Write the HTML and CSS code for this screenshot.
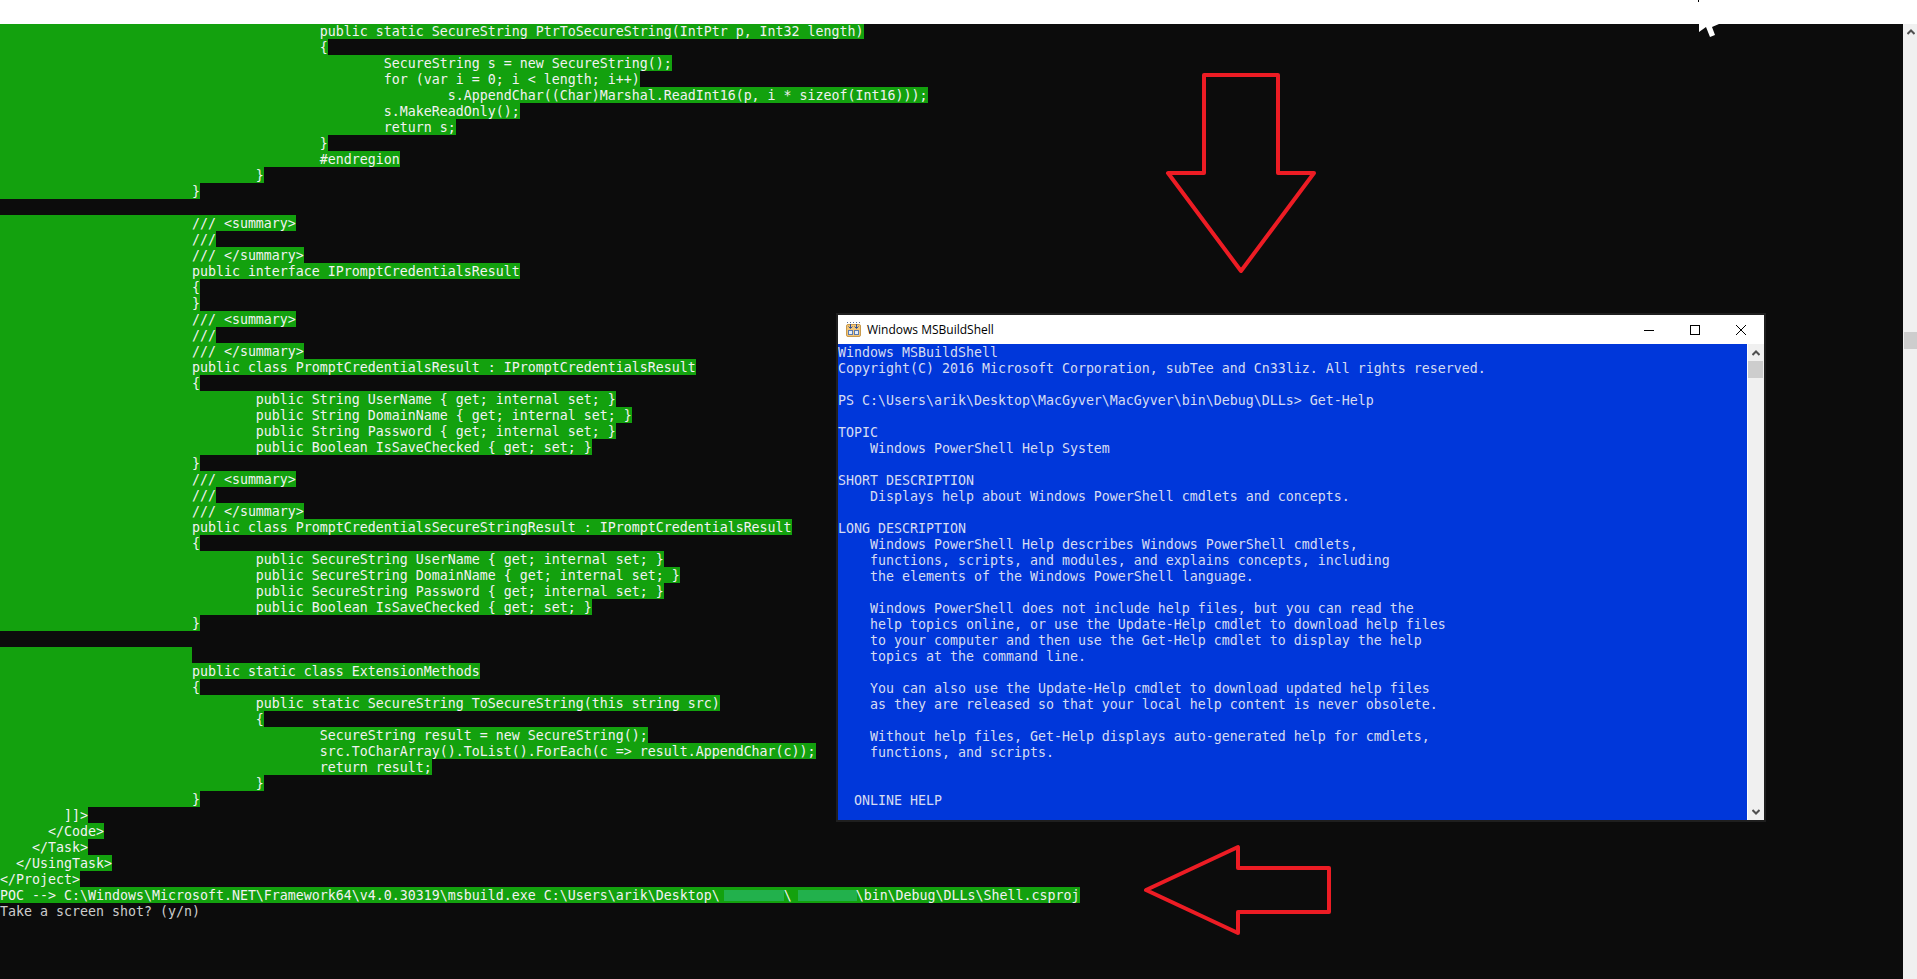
FILE: index.html
```html
<!DOCTYPE html>
<html lang="en">
<head>
<meta charset="utf-8">
<title>Windows MSBuildShell</title>
<link rel="stylesheet" href="styles.css">
</head>
<body>
<header class="topbar"></header>
<main class="screen">
<div class="log">
<div class="r"><span class="s">                                        public static SecureString PtrToSecureString(IntPtr p, Int32 length)</span></div>
<div class="r"><span class="s">                                        {</span></div>
<div class="r"><span class="s">                                                SecureString s = new SecureString();</span></div>
<div class="r"><span class="s">                                                for (var i = 0; i &lt; length; i++)</span></div>
<div class="r"><span class="s">                                                        s.AppendChar((Char)Marshal.ReadInt16(p, i * sizeof(Int16)));</span></div>
<div class="r"><span class="s">                                                s.MakeReadOnly();</span></div>
<div class="r"><span class="s">                                                return s;</span></div>
<div class="r"><span class="s">                                        }</span></div>
<div class="r"><span class="s">                                        #endregion</span></div>
<div class="r"><span class="s">                                }</span></div>
<div class="r"><span class="s">                        }</span></div>
<div class="r"></div>
<div class="r"><span class="s">                        /// &lt;summary&gt;</span></div>
<div class="r"><span class="s">                        ///</span></div>
<div class="r"><span class="s">                        /// &lt;/summary&gt;</span></div>
<div class="r"><span class="s">                        public interface IPromptCredentialsResult</span></div>
<div class="r"><span class="s">                        {</span></div>
<div class="r"><span class="s">                        }</span></div>
<div class="r"><span class="s">                        /// &lt;summary&gt;</span></div>
<div class="r"><span class="s">                        ///</span></div>
<div class="r"><span class="s">                        /// &lt;/summary&gt;</span></div>
<div class="r"><span class="s">                        public class PromptCredentialsResult : IPromptCredentialsResult</span></div>
<div class="r"><span class="s">                        {</span></div>
<div class="r"><span class="s">                                public String UserName { get; internal set; }</span></div>
<div class="r"><span class="s">                                public String DomainName { get; internal set; }</span></div>
<div class="r"><span class="s">                                public String Password { get; internal set; }</span></div>
<div class="r"><span class="s">                                public Boolean IsSaveChecked { get; set; }</span></div>
<div class="r"><span class="s">                        }</span></div>
<div class="r"><span class="s">                        /// &lt;summary&gt;</span></div>
<div class="r"><span class="s">                        ///</span></div>
<div class="r"><span class="s">                        /// &lt;/summary&gt;</span></div>
<div class="r"><span class="s">                        public class PromptCredentialsSecureStringResult : IPromptCredentialsResult</span></div>
<div class="r"><span class="s">                        {</span></div>
<div class="r"><span class="s">                                public SecureString UserName { get; internal set; }</span></div>
<div class="r"><span class="s">                                public SecureString DomainName { get; internal set; }</span></div>
<div class="r"><span class="s">                                public SecureString Password { get; internal set; }</span></div>
<div class="r"><span class="s">                                public Boolean IsSaveChecked { get; set; }</span></div>
<div class="r"><span class="s">                        }</span></div>
<div class="r"></div>
<div class="r"><span class="s">                        </span></div>
<div class="r"><span class="s">                        public static class ExtensionMethods</span></div>
<div class="r"><span class="s">                        {</span></div>
<div class="r"><span class="s">                                public static SecureString ToSecureString(this string src)</span></div>
<div class="r"><span class="s">                                {</span></div>
<div class="r"><span class="s">                                        SecureString result = new SecureString();</span></div>
<div class="r"><span class="s">                                        src.ToCharArray().ToList().ForEach(c =&gt; result.AppendChar(c));</span></div>
<div class="r"><span class="s">                                        return result;</span></div>
<div class="r"><span class="s">                                }</span></div>
<div class="r"><span class="s">                        }</span></div>
<div class="r"><span class="s">        ]]&gt;</span></div>
<div class="r"><span class="s">      &lt;/Code&gt;</span></div>
<div class="r"><span class="s">    &lt;/Task&gt;</span></div>
<div class="r"><span class="s">  &lt;/UsingTask&gt;</span></div>
<div class="r"><span class="s">&lt;/Project&gt;</span></div>
<div class="r"><span class="s">POC --&gt; C:\Windows\Microsoft.NET\Framework64\v4.0.30319\msbuild.exe C:\Users\arik\Desktop\<i class="redact"></i>\<i class="redact redact-b"></i>\bin\Debug\DLLs\Shell.csproj</span></div>
<div class="r">Take a screen shot? (y/n)</div>
</div>
<aside class="page-scroll">
<svg class="chev" width="8" height="6" viewBox="0 0 8 6"><path d="M0.5 5 4 1.5 7.5 5" /></svg>
<div class="page-thumb"></div>
</aside>
</main>

<section class="win">
<div class="win-title">
<svg class="win-icon" width="15" height="15" viewBox="0 0 15 15">
<path class="ic-dots" d="M1 0.5h1M4 0.5h1M7 0.5h1M10 0.5h1M13 0.5h1" />
<rect class="ic-box" x="0.5" y="2.5" width="14" height="12" rx="1.5" />
<rect class="ic-cell" x="2.5" y="8.5" width="4" height="4" />
<rect class="ic-cell" x="8.5" y="8.5" width="4" height="4" />
<path class="ic-arrow" d="M4.5 2v4M2.5 4.5l2 2 2-2M10.5 2v4M8.5 4.5l2 2 2-2" />
</svg>
<span class="win-name">Windows MSBuildShell</span>
<div class="win-btns">
<span class="btn"><svg width="10" height="10" viewBox="0 0 10 10"><path d="M0 5.5h10" /></svg></span>
<span class="btn"><svg width="10" height="10" viewBox="0 0 10 10"><rect x="0.5" y="0.5" width="9" height="9" /></svg></span>
<span class="btn"><svg width="10" height="10" viewBox="0 0 10 10"><path d="M0 0 10 10M10 0 0 10" /></svg></span>
</div>
</div>
<div class="win-body">
<div class="console">Windows MSBuildShell
Copyright(C) 2016 Microsoft Corporation, subTee and Cn33liz. All rights reserved.

PS C:\Users\arik\Desktop\MacGyver\MacGyver\bin\Debug\DLLs&gt; Get-Help

TOPIC
    Windows PowerShell Help System

SHORT DESCRIPTION
    Displays help about Windows PowerShell cmdlets and concepts.

LONG DESCRIPTION
    Windows PowerShell Help describes Windows PowerShell cmdlets,
    functions, scripts, and modules, and explains concepts, including
    the elements of the Windows PowerShell language.

    Windows PowerShell does not include help files, but you can read the
    help topics online, or use the Update-Help cmdlet to download help files
    to your computer and then use the Get-Help cmdlet to display the help
    topics at the command line.

    You can also use the Update-Help cmdlet to download updated help files
    as they are released so that your local help content is never obsolete.

    Without help files, Get-Help displays auto-generated help for cmdlets,
    functions, and scripts.


  ONLINE HELP</div>
<div class="win-scroll">
<div class="arrow-box"><svg class="chev" width="8" height="6" viewBox="0 0 8 6"><path d="M0.5 5 4 1.5 7.5 5" /></svg></div>
<div class="win-thumb"></div>
<div class="arrow-box arrow-end"><svg class="chev" width="8" height="6" viewBox="0 0 8 6"><path d="M0.5 1 4 4.5 7.5 1" /></svg></div>
</div>
</div>
</section>

<svg class="marks" width="1917" height="979" viewBox="0 0 1917 979">
<polygon class="mark" points="1204,75 1278,75 1278,173 1314,173 1241,271 1168,173 1204,173" />
<polygon class="mark" points="1146,890 1238,847 1238,868 1329,868 1329,912 1238,912 1238,933" />
<rect class="dot" x="1698" y="0" width="1" height="2" />
<polygon class="pointer" points="1699,24 1699,32 1706,27 1710,37 1715,35 1712,27 1719,24" />
</svg>
</body>
</html>
```
FILE: styles.css
```css
* { box-sizing: border-box; }
html, body { margin: 0; padding: 0; height: 100%; }
body {
  width: 1917px;
  height: 979px;
  overflow: hidden;
  background: #0c0c0c;
  display: flex;
  flex-direction: column;
  font-family: "DejaVu Sans Mono", "Liberation Mono", monospace;
  font-size: 13.29px;
  line-height: 16px;
  position: relative;
}
.topbar {
  height: 24px;
  flex: none;
  background: #fff;
  position: relative;
  z-index: 1;
}
.screen {
  flex: 1;
  display: flex;
  min-height: 0;
}
.log {
  flex: 1;
  margin-top: -1px;
  color: #cccccc;
  overflow: hidden;
}
.r { height: 16px; line-height: 18px; white-space: pre; }
.s {
  display: inline-block;
  height: 16px;
  vertical-align: top;
  background: #13a10e;
  color: #f2f2f2;
}
.redact {
  display: inline-block;
  width: 60px;
  height: 11px;
  margin-left: 4px;
  vertical-align: -1px;
  background: #22b14c;
}
.redact-b {
  width: 59px;
  margin-left: 6px;
  margin-right: -1px;
}
.page-scroll {
  width: 14px;
  flex: none;
  background: #f0f0f0;
  padding: 5px 0 0 1px;
  display: flex;
  flex-direction: column;
  align-items: stretch;
}
.page-scroll .chev { margin-left: 3px; flex: none; }
.page-thumb {
  height: 17px;
  margin-top: 297px;
  background: #cdcdcd;
}
.chev path { fill: none; stroke: #505050; stroke-width: 2; }

.win {
  position: absolute;
  left: 836px;
  top: 313px;
  width: 930px;
  height: 509px;
  border: 2px solid #1f1f1f;
  background: #fff;
  display: flex;
  flex-direction: column;
}
.win-title {
  height: 29px;
  flex: none;
  display: flex;
  align-items: center;
  padding-left: 8px;
  background: #fff;
}
.win-icon { flex: none; margin-right: 6px; }
.ic-dots { fill: none; stroke: #5a6f9a; stroke-width: 1; }
.ic-box { fill: #f2c578; stroke: #c99a4c; }
.ic-cell { fill: #e6eef8; stroke: #5b7bb0; }
.ic-arrow { fill: none; stroke: #2d4f96; stroke-width: 1; }
.win-name {
  font-family: "Open Sans", "Noto Sans", sans-serif;
  font-size: 12px;
  line-height: 16px;
  color: #000;
}
.win-btns { margin-left: auto; display: flex; height: 29px; }
.btn {
  width: 46px;
  display: flex;
  align-items: center;
  justify-content: center;
}
.btn svg path, .btn svg rect { fill: none; stroke: #000; stroke-width: 1; }
.win-body {
  flex: 1;
  display: flex;
  min-height: 0;
}
.console {
  flex: 1;
  padding-top: 1px;
  background: #0037da;
  color: #d6dcf2;
  white-space: pre;
  overflow: hidden;
}
.win-scroll {
  width: 17px;
  flex: none;
  background: #f0f0f0;
  border-left: 1px solid #fff;
  display: flex;
  flex-direction: column;
}
.arrow-box {
  height: 17px;
  flex: none;
  display: flex;
  align-items: center;
  justify-content: center;
}
.arrow-end { margin-top: auto; }
.win-thumb {
  height: 17px;
  margin-right: 1px;
  background: #cdcdcd;
}

.marks {
  position: absolute;
  left: 0;
  top: 0;
  z-index: 2;
  pointer-events: none;
}
.mark {
  fill: none;
  stroke: #ed1c24;
  stroke-width: 4;
  stroke-linejoin: round;
}
.dot { fill: #000; }
.pointer { fill: #fff; }
```
